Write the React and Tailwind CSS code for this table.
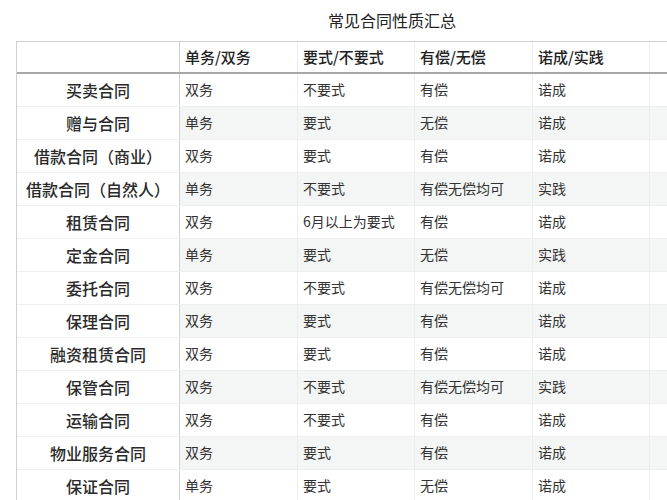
const rows = [
  ["买卖合同", "双务", "不要式", "有偿", "诺成"],
  ["赠与合同", "单务", "要式", "无偿", "诺成"],
  ["借款合同（商业）", "双务", "要式", "有偿", "诺成"],
  ["借款合同（自然人）", "单务", "不要式", "有偿无偿均可", "实践"],
  ["租赁合同", "双务", "6月以上为要式", "有偿", "诺成"],
  ["定金合同", "单务", "要式", "无偿", "实践"],
  ["委托合同", "双务", "不要式", "有偿无偿均可", "诺成"],
  ["保理合同", "双务", "要式", "有偿", "诺成"],
  ["融资租赁合同", "双务", "要式", "有偿", "诺成"],
  ["保管合同", "双务", "不要式", "有偿无偿均可", "实践"],
  ["运输合同", "双务", "不要式", "有偿", "诺成"],
  ["物业服务合同", "双务", "要式", "有偿", "诺成"],
  ["保证合同", "单务", "要式", "无偿", "诺成"],
];

const headers = ["单务/双务", "要式/不要式", "有偿/无偿", "诺成/实践"];

const grid = "grid grid-cols-[163px_118px_117px_118px_117px_119px]";

export default function App() {
  return (
    <div
      className="w-[667px] h-[500px] overflow-hidden bg-white text-[#333]"
      style={{ fontFamily: '"Noto Sans CJK SC", "Noto Sans", sans-serif' }}
    >
      <div className="ml-4 w-[752px]">
        <div className="h-[41px] pb-[1px] flex items-center justify-center text-[16px] text-[#222]">
          常见合同性质汇总
        </div>

        <div className="border-t border-l border-[#d0d0d0]">
          <div className={`${grid} h-[32px] border-b-2 border-[#a8a8a8]`}>
            <div className="border-r border-[#d0d0d0]" />
            {headers.map((h) => (
              <div
                key={h}
                className="flex items-center pl-[5px] text-[15px] font-medium text-[#222] border-r border-[#eeeeee]"
              >
                {h}
              </div>
            ))}
            <div />
          </div>

          {rows.map((r, i) => (
            <div
              key={r[0]}
              className={`${grid} h-[33px] border-b border-[#f0f0f0]`}
            >
              <div className="flex items-center justify-center text-[16px] font-medium text-[#2a2a2a] border-r border-[#d0d0d0] bg-white">
                {r[0]}
              </div>
              {r.slice(1).map((c, j) => (
                <div
                  key={j}
                  className={`flex items-center pl-[5px] pb-[2px] text-[14px] border-r border-[#eeeeee] ${
                    i % 2 === 1 ? "bg-[#f4f6f5]" : "bg-white"
                  }`}
                >
                  {c}
                </div>
              ))}
              <div className={i % 2 === 1 ? "bg-[#f4f6f5]" : "bg-white"} />
            </div>
          ))}
        </div>
      </div>
    </div>
  );
}
